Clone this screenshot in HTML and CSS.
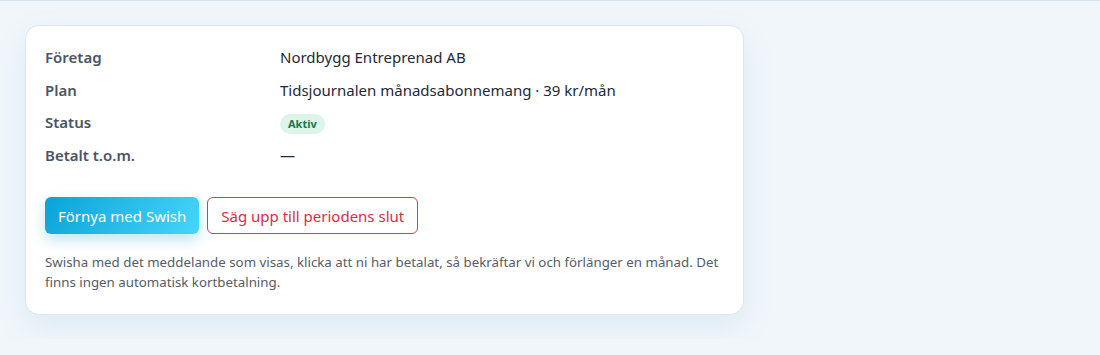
FILE: index.html
```html
<!DOCTYPE html>
<html lang="sv">
<head>
    <meta charset="UTF-8">
    <meta name="viewport" content="width=device-width, initial-scale=1.0">
    <title>Abonnemang</title>
    <link rel="stylesheet" href="styles.css">
</head>
<body>
<div class="topbar"></div>
<main class="page">
    <section class="card">
        <dl class="details">
            <dt>Företag</dt>
            <dd>Nordbygg Entreprenad AB</dd>
            <dt>Plan</dt>
            <dd>Tidsjournalen månadsabonnemang · 39 kr/mån</dd>
            <dt>Status</dt>
            <dd><span class="badge">Aktiv</span></dd>
            <dt>Betalt t.o.m.</dt>
            <dd>—</dd>
        </dl>
        <div class="actions">
            <button class="btn btn-primary">Förnya med Swish</button>
            <button class="btn btn-danger">Säg upp till periodens slut</button>
        </div>
        <p class="note">Swisha med det meddelande som visas, klicka att ni har betalat, så bekräftar vi och förlänger en månad. Det finns ingen automatisk kortbetalning.</p>
    </section>
</main>
</body>
</html>
```

FILE: styles.css
```css
body {
    margin: 0;
    background: #f1f6fa;
    font-family: "Noto Sans", "Open Sans", sans-serif;
    color: #1f2937;
}
.topbar {
    height: 1px;
    background: #d5e6f1;
}
.page {
    padding: 24px 25px;
}
.card {
    width: 679px;
    background: #fff;
    border: 1px solid #dbe7f0;
    border-radius: 14px;
    padding: 20px 19px 22px 19px;
    box-shadow: 0 12px 32px rgba(56, 140, 200, 0.10);
}
.details {
    display: grid;
    grid-template-columns: 235px 1fr;
    row-gap: 10.5px;
    margin: 0;
    font-size: 15px;
    line-height: 22px;
}
.details dt {
    font-weight: 600;
    color: #4b5563;
}
.details dd {
    margin: 0;
    color: #1f2937;
}
.badge {
    display: inline-block;
    padding: 0 8px;
    line-height: 20px;
    border-radius: 999px;
    background: #dcf5e8;
    color: #16794a;
    font-size: 11px;
    font-weight: 700;
    vertical-align: middle;
}
.actions {
    display: flex;
    gap: 8px;
    margin-top: 31px;
}
.btn {
    font-family: inherit;
    font-size: 15px;
    height: 37px;
    padding: 0 13px;
    border-radius: 6px;
    cursor: pointer;
}
.btn-primary {
    border: none;
    color: #fff;
    background: linear-gradient(120deg, #0aa3d8, #46d5fb);
    box-shadow: 0 6px 14px rgba(14, 165, 220, 0.28);
}
.btn-danger {
    border: 1px solid #d93a52;
    background: #fff;
    color: #d62e47;
}
.note {
    margin: 18px 0 0;
    font-size: 13.3px;
    line-height: 20px;
    color: #555d68;
}
```
